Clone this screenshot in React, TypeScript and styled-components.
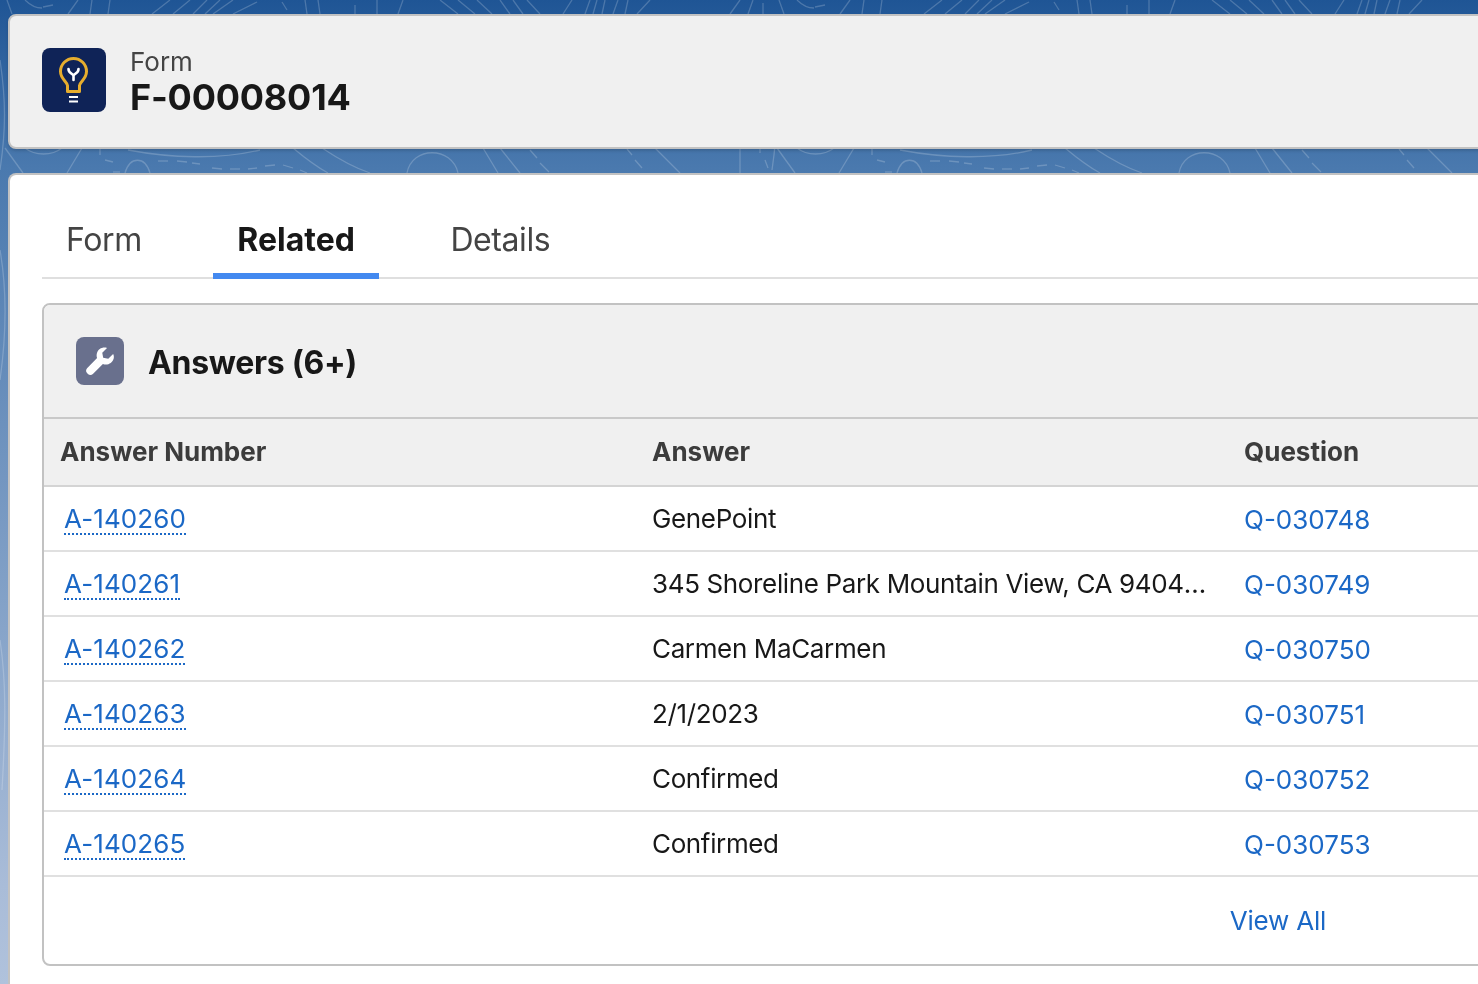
import styled, { createGlobalStyle } from "styled-components";

const GlobalStyle = createGlobalStyle`
  html, body {
    margin: 0;
    height: 100%;
    overflow: hidden;
    background: #fff;
  }
  body {
    font-family: Inter, "Liberation Sans", Arial, sans-serif;
    color: #181818;
  }
`;

const Backdrop = styled.div`
  position: fixed;
  inset: 0;
  background: linear-gradient(180deg, #1f5595 0%, #4a79ae 17%, #a9bcd8 90%, #b0c2dc 100%);
  svg {
    display: block;
    width: 100%;
    height: 100%;
  }
`;

const Page = styled.main`
  position: relative;
  width: 2540px;
  padding: 14px 0 0 8px;
`;

const HeaderCard = styled.header`
  height: 135px;
  box-sizing: border-box;
  display: flex;
  align-items: center;
  gap: 24px;
  padding: 0 32px;
  background: #f0f0f0;
  border: 2px solid #c2c2c2;
  border-radius: 8px;
  margin-bottom: 24px;
  box-shadow: 0 2px 3px rgba(0, 0, 0, 0.14);
`;

const ObjectIcon = styled.div`
  width: 64px;
  height: 64px;
  margin-bottom: 4px;
  border-radius: 8px;
  background: #0f2357;
  display: flex;
  align-items: center;
  justify-content: center;
`;

const TitleBlock = styled.div`
  display: flex;
  flex-direction: column;
`;

const ObjectLabel = styled.div`
  font-size: 26px;
  line-height: 30px;
  color: #444;
`;

const RecordTitle = styled.h1`
  margin: 0;
  font-size: 36px;
  line-height: 40px;
  font-weight: 700;
  letter-spacing: -0.2px;
  color: #181818;
`;

const BodyCard = styled.section`
  box-sizing: border-box;
  min-height: 900px;
  padding: 0 32px;
  background: #fff;
  border: 2px solid #c2c2c2;
  border-bottom: none;
  border-radius: 8px 8px 0 0;
`;

const TabBar = styled.nav`
  display: flex;
  height: 104px;
  box-sizing: border-box;
  border-bottom: 2px solid #dfdfdf;
  margin-bottom: 24px;
`;

const Tab = styled.a<{ $active?: boolean }>`
  display: flex;
  align-items: center;
  height: 104px;
  box-sizing: border-box;
  padding: 30px 24px 0;
  margin-right: 47.5px;
  font-size: 32px;
  letter-spacing: ${(p) => (p.$active ? "0" : "-0.4px")};
  font-weight: ${(p) => (p.$active ? 700 : 400)};
  color: ${(p) => (p.$active ? "#181818" : "#444")};
  border-bottom: 6px solid ${(p) => (p.$active ? "#4389f0" : "transparent")};
`;

const ListCard = styled.section`
  border: 2px solid #c2c2c2;
  border-radius: 8px;
  overflow: hidden;
`;

const ListHeader = styled.div`
  height: 112px;
  display: flex;
  align-items: center;
  gap: 24px;
  padding: 0 32px;
  background: #f0f0f0;
  border-bottom: 2px solid #c9c9c9;
`;

const ListIcon = styled.div`
  width: 48px;
  height: 48px;
  border-radius: 8px;
  background: #69708d;
  display: flex;
  align-items: center;
  justify-content: center;
`;

const ListTitle = styled.h2`
  margin: 2px 0 0;
  font-size: 32px;
  font-weight: 700;
  letter-spacing: -0.3px;
  color: #181818;
`;

const Row = styled.div`
  display: grid;
  grid-template-columns: repeat(4, 592px);
  align-items: center;
  height: 65px;
  box-sizing: border-box;
  border-bottom: 2px solid #e0e0e0;
`;

const HeadRow = styled(Row)`
  height: 68px;
  background: #f0f0f0;
  border-bottom-color: #d4d4d4;
`;

const HeadCell = styled.div`
  font-size: 26px;
  font-weight: 700;
  color: #3c3c3c;
  padding-left: 16px;
  margin-bottom: 2px;
`;

const Cell = styled.div`
  font-size: 26px;
  line-height: 40px;
  color: #181818;
  padding: 0 20px 0 16px;
  white-space: nowrap;
  overflow: hidden;
  text-overflow: ellipsis;
`;

const NumberCell = styled(Cell)`
  padding-left: 20px;
`;

const AnswerCell = styled(Cell)`
  letter-spacing: -0.36px;
`;

const QuestionCell = styled(Cell)`
  padding-top: 2px;
`;

const DottedLink = styled.a`
  display: inline-block;
  line-height: 28px;
  letter-spacing: 0.1px;
  color: #1b68c6;
  border-bottom: 2.5px dotted #1b68c6;
`;

const PlainLink = styled.a`
  color: #1b68c6;
`;

const Footer = styled.div`
  height: 87px;
  display: flex;
  align-items: center;
  justify-content: center;
  font-size: 26px;
  letter-spacing: -0.2px;
`;

const rows = [
  ["A-140260", "GenePoint", "Q-030748"],
  ["A-140261", "345 Shoreline Park Mountain View, CA 94043 USA", "Q-030749"],
  ["A-140262", "Carmen MaCarmen", "Q-030750"],
  ["A-140263", "2/1/2023", "Q-030751"],
  ["A-140264", "Confirmed", "Q-030752"],
  ["A-140265", "Confirmed", "Q-030753"],
];

// the backdrop texture repeats every 772px across
const contours = [
  // top strip
  "M7 0 L12 14", "M25 0 C30 5 36 8 42 8", "M43 7 L53 5", "M78 0 L68 14", "M92 0 L90 14",
  "M110 0 L108 14", "M170 0 L152 14", "M190 0 L173 14", "M207 0 L193 14", "M220 0 L205 14",
  "M233 0 L213 14", "M257 2 L233 14", "M282 2 L287 10", "M305 0 L307 14", "M318 0 L320 14",
  "M355 5 V14", "M377 0 V14", "M403 0 L398 14", "M440 0 L458 14", "M458 0 L475 14",
  "M477 0 L492 14", "M500 0 L510 14", "M513 0 L523 14", "M527 0 L540 14", "M572 0 L563 14",
  "M590 0 L585 14", "M597 0 L593 14", "M605 0 L602 14", "M618 0 L613 14", "M628 0 L625 14",
  "M650 0 L637 14", "M740 0 L730 14", "M753 0 L748 14", "M763 3 V14",
  // middle strip
  "M5 148 L23 173", "M25 148 C35 156 52 156 62 148", "M82 148 L67 173", "M100 148 V155",
  "M105 160 L113 162", "M125 173 C130 156 145 156 150 173", "M113 172 H120",
  "M158 161 H168", "M177 161 L187 162", "M192 163 L200 164", "M212 168 L222 169", "M230 169 H240",
  "M248 169 L257 168", "M265 166 L275 165", "M283 165 L293 168", "M300 170 L307 173",
  "M128 150 C170 158 220 160 260 150", "M293 148 C305 158 315 166 328 173",
  "M322 148 C340 160 355 168 370 173", "M407 173 C412 146 452 146 458 173", "M483 148 L498 173",
  "M500 148 L520 173", "M530 150 L537 158", "M540 163 L549 172", "M627 149 L632 155",
  "M635 160 L642 168", "M655 148 L680 173", "M740 148 V173", "M760 148 V153", "M765 160 L768 168",
  // left strip
  "M0 60 C6 100 6 130 0 170", "M0 250 C7 290 7 330 0 380", "M0 640 C6 680 6 720 2 790",
];

const App = () => (
  <>
    <GlobalStyle />
    <Backdrop>
      <svg viewBox="0 0 1478 984" preserveAspectRatio="none" aria-hidden="true">
        {[0, 772].map((x) => (
          <g key={x} transform={`translate(${x} 0)`}>
            {contours.map((d) => (
              <path key={d} d={d} fill="none" stroke="#ffffff" strokeOpacity="0.2" strokeWidth="1.3" />
            ))}
          </g>
        ))}
      </svg>
    </Backdrop>
    <Page>
      <HeaderCard>
        <ObjectIcon>
          <svg width="32" height="48" viewBox="0 0 32 48" fill="none">
            <path
              d="M9.5 35.5 V29.5 C9.5 26 2.5 23 2.5 15.5 A13 13 0 0 1 28.5 15.5 C28.5 23 21.5 26 21.5 29.5 V35.5 Z"
              stroke="#e6ad2e"
              strokeWidth="3"
              strokeLinejoin="round"
            />
            <path
              d="M10.5 13 C10.5 18 15.5 17 15.5 20 V24 M20.5 13 C20.5 18 15.5 17 15.5 20"
              stroke="#fff"
              strokeWidth="2.6"
              strokeLinecap="round"
            />
            <path d="M11 41 H20 M11 45.5 H20" stroke="#fff" strokeWidth="2.2" />
          </svg>
        </ObjectIcon>
        <TitleBlock>
          <ObjectLabel>Form</ObjectLabel>
          <RecordTitle>F-00008014</RecordTitle>
        </TitleBlock>
      </HeaderCard>
      <BodyCard>
        <TabBar>
          <Tab>Form</Tab>
          <Tab $active>Related</Tab>
          <Tab>Details</Tab>
        </TabBar>
        <ListCard>
          <ListHeader>
            <ListIcon>
              <svg width="30" height="30" viewBox="0 0 32 32" fill="#fff">
                <path d="M30 8.5 L24.8 13.6 L19.4 12.6 L18.4 7.2 L23.5 2 C18.8 0.6 14 3 12.7 7.6 C12.2 9.4 12.3 11.2 12.9 12.9 L2.2 23.6 C0.8 25 0.8 27.5 2.2 28.9 L3.1 29.8 C4.5 31.2 7 31.2 8.4 29.8 L19.1 19.1 C24 20.9 29.3 18.2 30.6 13.2 C31 11.6 30.8 10 30 8.5 Z" />
              </svg>
            </ListIcon>
            <ListTitle>Answers (6+)</ListTitle>
          </ListHeader>
          <HeadRow>
            <HeadCell>Answer Number</HeadCell>
            <HeadCell>Answer</HeadCell>
            <HeadCell>Question</HeadCell>
          </HeadRow>
          {rows.map(([num, answer, question]) => (
            <Row key={num}>
              <NumberCell>
                <DottedLink>{num}</DottedLink>
              </NumberCell>
              <AnswerCell>{answer}</AnswerCell>
              <QuestionCell>
                <PlainLink>{question}</PlainLink>
              </QuestionCell>
            </Row>
          ))}
          <Footer>
            <PlainLink>View All</PlainLink>
          </Footer>
        </ListCard>
      </BodyCard>
    </Page>
  </>
);

export default App;
